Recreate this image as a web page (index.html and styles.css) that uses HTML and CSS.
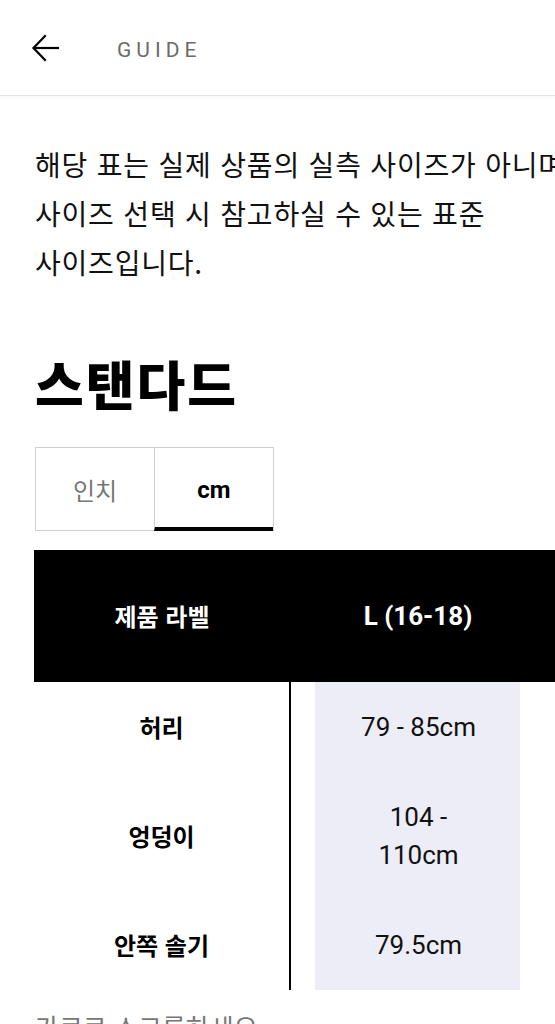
FILE: index.html
```html
<!DOCTYPE html>
<html lang="ko">
<head>
<meta charset="utf-8">
<title>GUIDE</title>
<link rel="stylesheet" href="styles.css">
</head>
<body>
<header class="topbar">
  <button class="back" aria-label="뒤로">
    <svg width="28" height="28" viewBox="0 0 28 28" fill="none" stroke="#000" stroke-width="2.2" stroke-linecap="square">
      <path d="M3 14H27"/>
      <path d="M14 2L2.5 14L14 26"/>
    </svg>
  </button>
  <span class="title">GUIDE</span>
</header>
<main class="content">
  <p class="intro">해당 표는 실제 상품의 실측 사이즈가 아니며, 사이즈 선택 시 참고하실 수 있는 표준 사이즈입니다.</p>
  <h1 class="section-title">스탠다드</h1>
  <div class="unit-tabs">
    <button class="tab">인치</button>
    <button class="tab active">cm</button>
  </div>
  <table class="size-table">
    <thead>
      <tr>
        <th class="col-label">제품 라벨</th>
        <th class="col-value">L (16-18)</th>
        <th class="col-rest"></th>
      </tr>
    </thead>
    <tbody>
      <tr>
        <td class="label">허리</td>
        <td class="value">79 - 85cm</td>
        <td></td>
      </tr>
      <tr>
        <td class="label">엉덩이</td>
        <td class="value">104 -<br>110cm</td>
        <td></td>
      </tr>
      <tr>
        <td class="label">안쪽 솔기</td>
        <td class="value">79.5cm</td>
        <td></td>
      </tr>
    </tbody>
  </table>
  <p class="hint">가로로 스크롤하세요</p>
</main>
</body>
</html>
```
FILE: styles.css
```css
html, body {
  margin: 0;
  padding: 0;
  background: #fff;
  overflow-x: hidden;
}
body {
  width: 555px;
  font-family: Roboto, "Noto Sans CJK KR", sans-serif;
  color: #000;
}
.topbar {
  height: 96px;
  display: flex;
  align-items: center;
  border-bottom: 1px solid #e4e4e4;
  box-shadow: 0 2px 3px rgba(0,0,0,0.03);
  box-sizing: border-box;
}
.back {
  background: none;
  border: 0;
  padding: 0;
  margin: 0 0 0 31px;
  width: 28px;
  height: 28px;
  display: flex;
}
.title {
  margin-left: 58px;
  font-family: Roboto, sans-serif;
  font-size: 21px;
  font-weight: 400;
  letter-spacing: 5px;
  color: #6b6b6b;
  line-height: 1;
  margin-top: 5px;
}
.content {
  width: 620px;
  padding: 44px 0 0 35px;
}
.intro {
  margin: 0;
  width: 590px;
  font-family: "Noto Sans CJK KR", sans-serif;
  font-size: 28px;
  line-height: 49px;
  color: #111;
  letter-spacing: 0.8px;
  word-break: keep-all;
}
.section-title {
  margin: 66px 0 0;
  font-family: "Noto Sans CJK KR", sans-serif;
  font-size: 53px;
  font-weight: 900;
  line-height: 60px;
  letter-spacing: 2px;
}
.unit-tabs {
  margin-top: 34px;
  display: flex;
  width: 239px;
  height: 84px;
  border: 1px solid #cfd0d4;
  box-sizing: border-box;
}
.tab {
  flex: 1;
  background: #fff;
  border: 0;
  padding: 0;
  font-family: Roboto, "Noto Sans CJK KR", sans-serif;
  font-size: 24px;
  color: #777;
  position: relative;
}
.tab + .tab {
  border-left: 1px solid #cfd0d4;
}
.tab.active {
  color: #000;
  font-weight: 700;
  border-bottom: 4px solid #000;
  padding-top: 4px;
  margin-bottom: -1px;
}
.size-table {
  margin-top: 19px;
  margin-left: -1px;
  border-collapse: collapse;
  table-layout: fixed;
  width: 620px;
}
.size-table th {
  background: #000;
  color: #fff;
  font-weight: 700;
  font-size: 26px;
  line-height: 32px;
  padding: 50px 0;
  text-align: center;
}
.size-table th.col-label {
  width: 256px;
  font-family: "Noto Sans CJK KR", sans-serif;
  font-size: 24px;
}
.size-table th.col-value {
  width: 256px;
}
.size-table td {
  padding: 26px 0;
  text-align: center;
  vertical-align: middle;
  line-height: 38px;
}
.size-table td.label {
  font-family: "Noto Sans CJK KR", sans-serif;
  font-size: 24px;
  font-weight: 700;
  border-right: 2px solid #000;
}
.size-table td.value {
  font-size: 26px;
  color: #111;
  background: linear-gradient(to right, transparent 24px, #ecedf6 24px, #ecedf6 calc(100% - 26px), transparent calc(100% - 26px));
}
.hint {
  margin: 17px 0 0;
  font-family: "Noto Sans CJK KR", sans-serif;
  font-size: 26px;
  line-height: 40px;
  color: #777;
}
```
